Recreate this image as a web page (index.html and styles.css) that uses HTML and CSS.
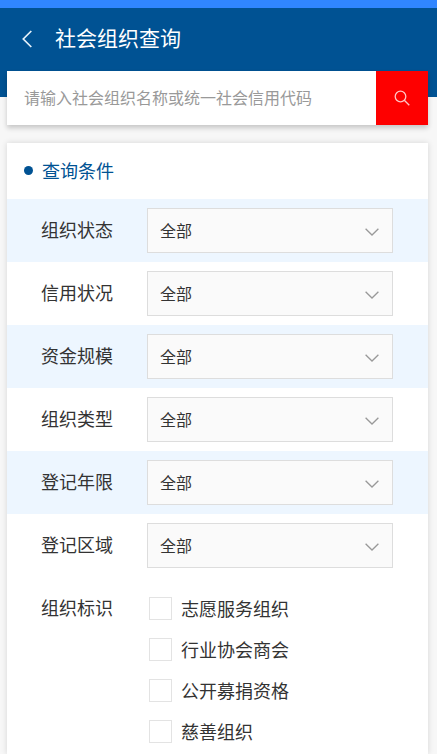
FILE: index.html
```html
<!DOCTYPE html>
<html lang="zh-CN">
<head>
<meta charset="utf-8">
<meta name="viewport" content="width=device-width, initial-scale=1">
<title>社会组织查询</title>
<link rel="stylesheet" href="styles.css">
</head>
<body>
<header class="header">
  <a class="back" href="#" aria-label="返回"><svg width="10" height="18" viewBox="0 0 10 18"><path d="M9.300 1 1.300 9 9.300 17"/></svg></a>
  <h1 class="title">社会组织查询</h1>
</header>
<form class="search">
  <input class="search-input" type="text" aria-label="搜索" placeholder="请输入社会组织名称或统一社会信用代码">
  <button class="search-button" type="button" aria-label="查询"><svg width="16" height="16" viewBox="0 0 16 16"><circle cx="6.500" cy="6.500" r="5.300"/><path d="M10.300 10.300 15.300 15.300"/></svg></button>
</form>
<main class="card">
  <h2 class="card-title">查询条件</h2>
  <div class="row"><label class="label" for="status">组织状态</label><div class="select"><select id="status"><option>全部</option></select><svg class="arrow" width="14" height="8" viewBox="0 0 14 8"><path d="M.6 .7 7 7 13.400 .7"/></svg></div></div>
  <div class="row"><label class="label" for="credit">信用状况</label><div class="select"><select id="credit"><option>全部</option></select><svg class="arrow" width="14" height="8" viewBox="0 0 14 8"><path d="M.6 .7 7 7 13.400 .7"/></svg></div></div>
  <div class="row"><label class="label" for="fund">资金规模</label><div class="select"><select id="fund"><option>全部</option></select><svg class="arrow" width="14" height="8" viewBox="0 0 14 8"><path d="M.6 .7 7 7 13.400 .7"/></svg></div></div>
  <div class="row"><label class="label" for="type">组织类型</label><div class="select"><select id="type"><option>全部</option></select><svg class="arrow" width="14" height="8" viewBox="0 0 14 8"><path d="M.6 .7 7 7 13.400 .7"/></svg></div></div>
  <div class="row"><label class="label" for="years">登记年限</label><div class="select"><select id="years"><option>全部</option></select><svg class="arrow" width="14" height="8" viewBox="0 0 14 8"><path d="M.6 .7 7 7 13.400 .7"/></svg></div></div>
  <div class="row"><label class="label" for="region">登记区域</label><div class="select"><select id="region"><option>全部</option></select><svg class="arrow" width="14" height="8" viewBox="0 0 14 8"><path d="M.6 .7 7 7 13.400 .7"/></svg></div></div>
  <div class="group" role="group" aria-labelledby="marks">
    <span class="label" id="marks">组织标识</span>
    <div class="checks">
      <label class="check"><input type="checkbox">志愿服务组织</label>
      <label class="check"><input type="checkbox">行业协会商会</label>
      <label class="check"><input type="checkbox">公开募捐资格</label>
      <label class="check"><input type="checkbox">慈善组织</label>
    </div>
  </div>
</main>
</body>
</html>
```
FILE: styles.css
```css
* {
  box-sizing: border-box;
}

body {
  display: flex;
  flex-direction: column;
  min-height: 100vh;
  margin: 0;
  background: #f7f7f7;
  color: #333;
  font-family: "Noto Sans CJK SC", sans-serif;
  font-size: 18px;
  line-height: 24px;
}

svg {
  display: block;
  fill: none;
  stroke: currentColor;
}

.header {
  display: flex;
  align-items: flex-start;
  gap: 23px;
  height: 97px;
  padding: 13px 22px 0;
  border-top: 8px solid #3086ff;
  background: #005293;
  color: #fff;
}

.back {
  display: flex;
  align-items: center;
  height: 36px;
  color: #e6f2fa;
  stroke-width: 1.7;
}

.title {
  margin: 0;
  font-size: 21px;
  font-weight: 400;
  line-height: 32px;
}

.search {
  display: flex;
  height: 54px;
  margin: -26px 9px 0 7px;
  background: #fff;
  box-shadow: 0 3px 5px rgba(0, 0, 0, 0.2);
}

.search-input {
  flex: 1;
  min-width: 0;
  padding: 0 17px 3px;
  border: 0;
  background: transparent;
  color: #333;
  font: inherit;
  font-size: 16px;
}

.search-input::placeholder {
  color: #999;
  opacity: 1;
}

.search-button {
  display: flex;
  align-items: center;
  justify-content: center;
  width: 52px;
  padding: 0;
  border: 0;
  background: #fe0000;
  color: #ffc4c4;
  stroke-width: 1.3;
}

.card {
  flex: 1;
  margin: 18px 9px 0 7px;
  background: #fff;
  box-shadow: 0 0 6px rgba(0, 0, 0, 0.14);
}

.card-title {
  display: flex;
  align-items: center;
  gap: 9px;
  height: 56px;
  margin: 0;
  padding: 0 17px 2px;
  color: #005293;
  font-size: 18px;
  font-weight: 400;
}

.card-title::before {
  width: 9px;
  height: 9px;
  border-radius: 50%;
  background: #005293;
  content: "";
}

.row {
  display: flex;
  align-items: center;
  padding: 9px 35px 9px 34px;
}

.row:nth-of-type(odd) {
  background: #edf6ff;
}

.label {
  flex: none;
  width: 106px;
  padding-bottom: 4px;
}

.select {
  position: relative;
  flex: 1;
}

.select select {
  display: block;
  width: 100%;
  height: 45px;
  padding: 0 40px 2px 12px;
  border: 1px solid #ddd;
  border-radius: 0;
  appearance: none;
  background: #fafafa;
  color: #333;
  font: inherit;
  font-size: 16px;
}

.arrow {
  position: absolute;
  top: 20px;
  right: 14px;
  color: #999;
  stroke-width: 1.3;
  pointer-events: none;
}

.group {
  display: flex;
  padding: 18px 35px 10px 34px;
}

.checks {
  display: flex;
  flex-direction: column;
  gap: 17px;
  padding: 1px 0 0 2px;
}

.check {
  display: flex;
  align-items: center;
  gap: 9px;
}

.check input {
  width: 23px;
  height: 23px;
  margin: 0;
  border: 1px solid #e3e3e3;
  appearance: none;
  background: #fff;
}
```
